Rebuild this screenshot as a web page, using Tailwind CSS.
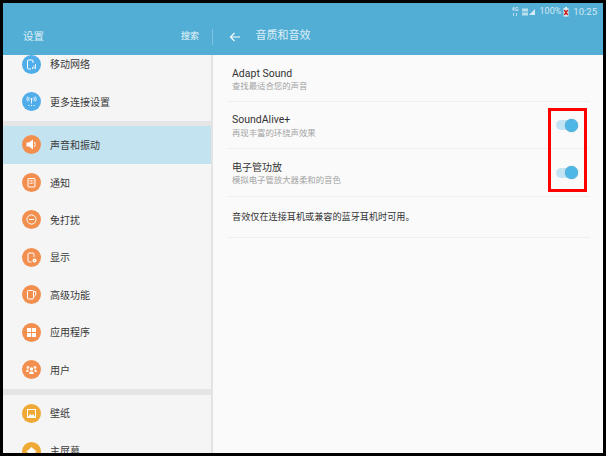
<!DOCTYPE html>
<html lang="zh">
<head>
  <meta charset="UTF-8" />
  <title>设置</title>
  <script src="https://cdn.jsdelivr.net/npm/@tailwindcss/browser@4"></script>
</head>
<body class="bg-black">
  <div class="relative w-[606px] h-[456px] overflow-hidden bg-black pt-[3px] pl-[3px] pr-[3px] pb-[3px] font-['Roboto','Noto_Sans_CJK_SC',sans-serif]">
    <div class="flex flex-col h-full w-full overflow-hidden">

      <!-- header -->
      <header class="bg-[#52aed4] h-[52px] shrink-0 flex flex-col text-white">
        <div class="h-[16px] pt-[1px] flex items-center justify-end pr-[6px] text-[9.5px] text-white/75 leading-none">
          <span class="w-[7px] flex flex-col items-center mr-[3px]">
            <span class="text-[5.5px] leading-[5px] font-bold text-white/70">4G</span>
            <svg width="6" height="3" viewBox="0 0 6 3" class="mt-[1px]"><rect x="1" y="0" width="1" height="3" fill="#fff" fill-opacity=".6"/><rect x="4" y="0" width="1" height="3" fill="#fff" fill-opacity=".6"/></svg>
          </span>
          <svg width="6" height="8" viewBox="0 0 6 8" class="mr-[1px]"><rect x="0" y="0.5" width="6" height="3" fill="#fff" fill-opacity=".6"/><rect x="0" y="4.5" width="6" height="3" fill="#fff" fill-opacity=".6"/></svg>
          <svg width="6" height="7" viewBox="0 0 6 7" class="mr-[5px]"><path d="M0 7 L6 1 V7 Z" fill="#fff" fill-opacity=".75"/></svg>
          <span class="text-[9px]">100%</span>
          <svg width="6" height="10" viewBox="0 0 6 10" class="ml-[2px] mr-[4px]"><rect x="0.5" y="1.2" width="5" height="8.3" fill="#fff" fill-opacity=".85"/><rect x="2" y="0" width="2" height="1.2" fill="#fff" fill-opacity=".85"/><path d="M1.3 3 L4.7 8 M4.7 3 L1.3 8" stroke="#c81e1e" stroke-width="1.4"/></svg>
          <span>10:25</span>
        </div>
        <div class="flex-1 flex items-center pb-[1px]">
          <div class="w-[210px] h-[16px] flex items-center justify-between pl-[20px] pr-[13px] border-r border-white/25">
            <span class="text-[10.5px] text-white/80">设置</span>
            <span class="text-[9px] text-white/90">搜索</span>
          </div>
          <svg width="12" height="12" viewBox="0 0 12 12" fill="none" class="ml-[16px]">
            <path d="M11 6 H1.5 M5.5 2 L1.5 6 L5.5 10" stroke="#fff" stroke-opacity=".95" stroke-width="1.2"/>
          </svg>
          <span class="ml-[14.5px] text-[11px] text-white/80">音质和音效</span>
        </div>
      </header>

      <div class="flex flex-1 min-h-0">
        <!-- settings list -->
        <nav class="w-[210px] shrink-0 bg-[#f5f5f5] border-r-2 border-[#e3e3e3] overflow-hidden text-[10px] text-[#3a3a3a]">
          <div class="mt-[-9.5px]">
            <div class="h-[37.5px] flex items-center pl-[19px] gap-[9px]">
              <span class="w-[19px] h-[19px] rounded-full bg-[#4fade9] flex items-center justify-center">
                <svg width="13" height="13" viewBox="0 0 13 13" fill="none" stroke="#fff"><path d="M8 5 V3 A1 1 0 0 0 7 2 H3.5 A1 1 0 0 0 2.5 3 V10 A1 1 0 0 0 3.5 11 H6"/><path d="M7.5 9 V11 M9 7.5 V11 M10.5 6 V11" stroke-width=".8"/></svg>
              </span>
              <span>移动网络</span>
            </div>
            <div class="h-[37.5px] flex items-center pl-[19px] gap-[9px]">
              <span class="w-[19px] h-[19px] rounded-full bg-[#4fade9] flex items-center justify-center">
                <svg width="13" height="13" viewBox="0 0 13 13" fill="none" stroke="#fff" stroke-width=".9"><circle cx="6.5" cy="4" r="1" fill="#fff" stroke="none"/><path d="M6.5 5 V8.5"/><path d="M4.2 2 Q3 4 4.2 6 M8.8 2 Q10 4 8.8 6 M2.6 1.5 Q1 4 2.6 6.5 M10.4 1.5 Q12 4 10.4 6.5" stroke-width=".8"/><path d="M3.5 10.5 H4.5 M6 10.5 H7 M8.5 10.5 H9.5" stroke-width="1.2"/></svg>
              </span>
              <span class="pt-[2px]">更多连接设置</span>
            </div>
            <div class="h-[5.5px] bg-[#e5e5e5]"></div>
            <div class="h-[37.5px] flex items-center pl-[19px] gap-[9px] bg-[#c3e3f0]">
              <span class="w-[19px] h-[19px] rounded-full bg-[#f28f4e] flex items-center justify-center">
                <svg width="13" height="13" viewBox="0 0 13 13" fill="#fff"><path d="M1.5 4.5 H4 L8 1.5 V11.5 L4 8.5 H1.5 Z"/><path d="M9.5 4 Q11 6.5 9.5 9" fill="none" stroke="#fff"/></svg>
              </span>
              <span class="pt-[2px]">声音和振动</span>
            </div>
            <div class="h-[37.5px] flex items-center pl-[19px] gap-[9px]">
              <span class="w-[19px] h-[19px] rounded-full bg-[#f28f4e] flex items-center justify-center">
                <svg width="13" height="13" viewBox="0 0 13 13" fill="none" stroke="#fff"><rect x="3" y="2.5" width="7" height="8.5" rx=".5"/><path d="M4.5 4.5 H8.5 M4.5 6 H8.5 M4.5 7.5 H8.5" stroke-width=".8" stroke-dasharray="1 .5"/></svg>
              </span>
              <span class="pt-[2px]">通知</span>
            </div>
            <div class="h-[37.5px] flex items-center pl-[19px] gap-[9px]">
              <span class="w-[19px] h-[19px] rounded-full bg-[#f28f4e] flex items-center justify-center">
                <svg width="13" height="13" viewBox="0 0 13 13" fill="none" stroke="#fff"><circle cx="6.5" cy="6.5" r="4.6"/><path d="M4 6.5 H9"/></svg>
              </span>
              <span class="pt-[2px]">免打扰</span>
            </div>
            <div class="h-[37.5px] flex items-center pl-[19px] gap-[9px]">
              <span class="w-[19px] h-[19px] rounded-full bg-[#f28f4e] flex items-center justify-center">
                <svg width="13" height="13" viewBox="0 0 13 13" fill="none" stroke="#fff"><path d="M9 6 V3 A1 1 0 0 0 8 2 H4 A1 1 0 0 0 3 3 V10 A1 1 0 0 0 4 11 H6.5"/><circle cx="9.5" cy="9.5" r="2" fill="#fff" stroke="none"/><circle cx="9.5" cy="9.5" r=".6" fill="#f28f4e" stroke="none"/></svg>
              </span>
              <span>显示</span>
            </div>
            <div class="h-[37.5px] flex items-center pl-[19px] gap-[9px]">
              <span class="w-[19px] h-[19px] rounded-full bg-[#f28f4e] flex items-center justify-center">
                <svg width="13" height="13" viewBox="0 0 13 13" fill="none" stroke="#fff"><rect x="2.5" y="2.5" width="6" height="8.5" rx=".8"/><path d="M9 3.5 L10.8 3.5 V7 L9 8.5"/></svg>
              </span>
              <span class="pt-[2px]">高级功能</span>
            </div>
            <div class="h-[37.5px] flex items-center pl-[19px] gap-[9px]">
              <span class="w-[19px] h-[19px] rounded-full bg-[#f28f4e] flex items-center justify-center">
                <svg width="13" height="13" viewBox="0 0 13 13" fill="#fff"><rect x="2" y="2" width="4.1" height="4.1" rx=".5"/><rect x="6.9" y="2" width="4.1" height="4.1" rx=".5"/><rect x="2" y="6.9" width="4.1" height="4.1" rx=".5"/><rect x="6.9" y="6.9" width="4.1" height="4.1" rx=".5"/></svg>
              </span>
              <span>应用程序</span>
            </div>
            <div class="h-[37.5px] flex items-center pl-[19px] gap-[9px]">
              <span class="w-[19px] h-[19px] rounded-full bg-[#f28f4e] flex items-center justify-center">
                <svg width="13" height="13" viewBox="0 0 13 13" fill="#fff"><circle cx="6.5" cy="6" r="1.7"/><path d="M4.2 11 Q4.2 8.2 6.5 8.2 Q8.8 8.2 8.8 11 Z"/><circle cx="3" cy="4.5" r="1.4" fill-opacity=".85"/><circle cx="10" cy="4.5" r="1.4" fill-opacity=".85"/><path d="M1 9 Q1 6.3 3 6.3 L3.8 7.6 L3.2 9 Z M12 9 Q12 6.3 10 6.3 L9.2 7.6 L9.8 9 Z" fill-opacity=".85"/></svg>
              </span>
              <span class="pt-[2px]">用户</span>
            </div>
            <div class="h-[6.5px] bg-[#e5e5e5]"></div>
            <div class="h-[37.5px] flex items-center pl-[19px] gap-[9px]">
              <span class="w-[19px] h-[19px] rounded-full bg-[#efa935] flex items-center justify-center">
                <svg width="13" height="13" viewBox="0 0 13 13" fill="none" stroke="#fff"><rect x="2.5" y="2.5" width="8" height="8"/><path d="M3 10 L5.3 6.8 L6.8 8.3 L8.2 7 L10 10 Z" fill="#fff" stroke="none"/></svg>
              </span>
              <span>壁纸</span>
            </div>
            <div class="h-[37.5px] flex items-center pl-[19px] gap-[9px]">
              <span class="w-[19px] h-[19px] rounded-full bg-[#efa935] flex items-center justify-center">
                <svg width="13" height="13" viewBox="0 0 13 13" fill="#fff"><path d="M6.5 2 L12 7 H10.3 V11 H2.7 V7 H1 Z"/></svg>
              </span>
              <span>主屏幕</span>
            </div>
          </div>
        </nav>

        <!-- sound quality panel -->
        <main class="flex-1 bg-[#fafafa] pl-[14px] pr-[13px] text-[#333]">
          <div class="h-[46.5px] pl-[5px] pt-[12px] border-b border-[#efefef] flex flex-col">
            <span class="text-[10.5px] leading-[13px]">Adapt Sound</span>
            <span class="text-[8.4px] leading-[11px] mt-[1px] text-[#a3a3a3]">查找最适合您的声音</span>
          </div>
          <div class="h-[47.5px] pl-[5px] pr-[12px] pt-[11.5px] border-b border-[#efefef] flex justify-between">
            <div class="flex flex-col">
              <span class="text-[10.5px] leading-[13px]">SoundAlive+</span>
              <span class="text-[8.4px] leading-[11px] mt-[1.5px] text-[#a3a3a3]">再现丰富的环绕声效果</span>
            </div>
            <div class="relative w-[22px] h-[10px] mt-[7px] rounded-full bg-[#c2e4f3]">
              <span class="absolute right-0 top-[-1.5px] w-[13px] h-[13px] rounded-full bg-[#4fb7e6] shadow-[0_0_1px_#5a8ba3]"></span>
            </div>
          </div>
          <div class="h-[47.5px] pl-[5px] pr-[12px] pt-[12px] border-b border-[#efefef] flex justify-between">
            <div class="flex flex-col">
              <span class="text-[10px] leading-[13px]">电子管功放</span>
              <span class="text-[8.4px] leading-[11px] mt-[1px] text-[#a3a3a3]">模拟电子管放大器柔和的音色</span>
            </div>
            <div class="relative w-[22px] h-[10px] mt-[6.5px] rounded-full bg-[#c2e4f3]">
              <span class="absolute right-0 top-[-1.5px] w-[13px] h-[13px] rounded-full bg-[#4fb7e6] shadow-[0_0_1px_#5a8ba3]"></span>
            </div>
          </div>
          <div class="h-[41px] pl-[5px] pt-[2px] flex items-center border-b border-[#efefef] text-[9.15px]">音效仅在连接耳机或兼容的蓝牙耳机时可用。</div>
        </main>
      </div>
    </div>

    <!-- annotation over the switches -->
    <div class="absolute left-[548px] top-[108px] w-[39px] h-[84px] border-[3px] border-[#ff0000]"></div>
  </div>
</body>
</html>
